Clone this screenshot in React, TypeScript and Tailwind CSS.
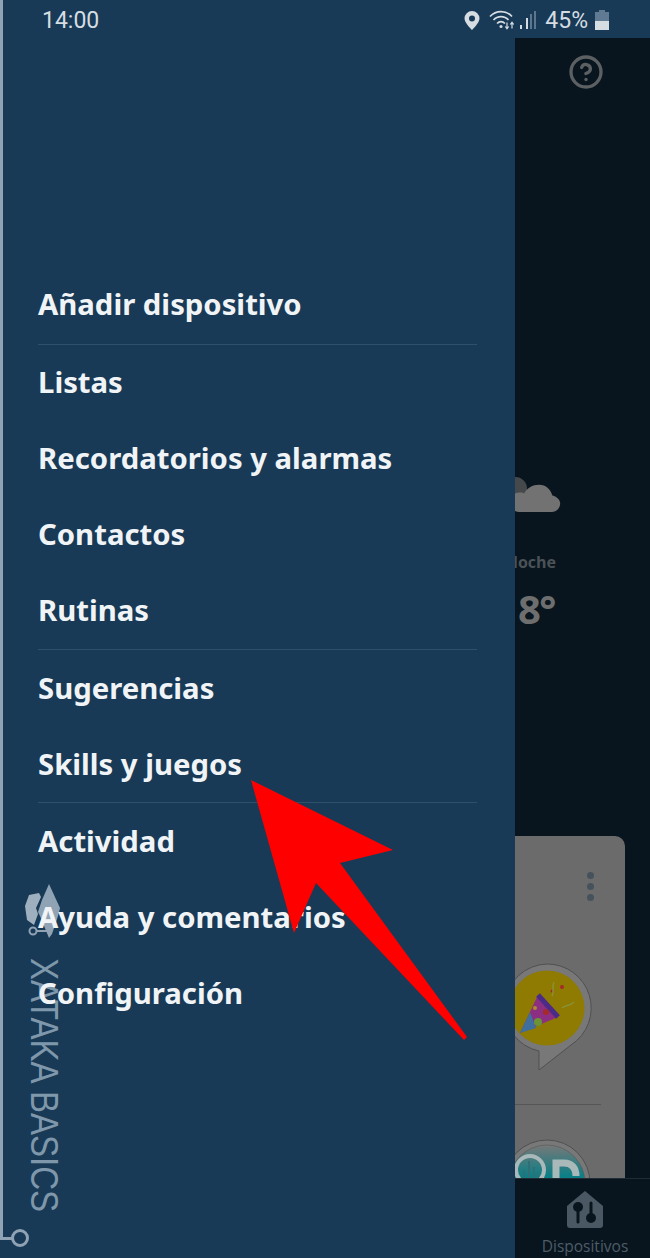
import { CircleHelp } from "lucide-react";

const GROUPS = [
  { cls: "pb-[2px]", items: ["Añadir dispositivo"] },
  { cls: "border-t border-[#2f506b] pb-[1px] [&>li:first-child]:-mt-px", items: ["Listas", "Recordatorios y alarmas", "Contactos", "Rutinas"] },
  { cls: "border-t border-[#2f506b]", items: ["Sugerencias", "Skills y juegos"] },
  { cls: "border-t border-[#2f506b]", items: ["Actividad", "Ayuda y comentarios", "Configuración"] },
];

function StatusIcons() {
  return (
    <div className="flex items-center">
      <svg width="16" height="19" viewBox="0 0 16 19" className="mr-[9px]">
        <path d="M8 0a7.500 7.500 0 0 0-7.500 7.500C.5 12 8 19 8 19s7.500-7 7.500-11.500A7.500 7.500 0 0 0 8 0zm0 4.500a3 3 0 1 1 0 6 3 3 0 0 1 0-6z" fill="#d5dde3" />
      </svg>
      <svg width="47" height="20" viewBox="0 0 47 20" className="mr-[9px]" fill="none">
        <path d="M1 6.500c6-6.500 16-6.500 22 0M4.500 10c4-4.500 11-4.500 15 0M8 13.500c2.500-2.500 5.500-2.500 8 0" stroke="#d5dde3" strokeWidth="1.700" />
        <circle cx="12" cy="16.500" r="1.500" fill="#d5dde3" />
        <path d="M18 12.500v6M16.300 16.500l1.700 2.200 1.700-2.200M23 18.500v-6M21.300 14.500l1.700-2.200 1.700 2.200" stroke="#d5dde3" strokeWidth="1.200" />
        <path d="M32 19v-4M38 19V8" stroke="#d5dde3" strokeWidth="2" />
        <path d="M42 19V4M46 19V1" stroke="#6d869b" strokeWidth="1.600" />
      </svg>
      <span className="mr-[7px] text-[23px] leading-none text-[#d5dde3]">45%</span>
      <svg width="14" height="20" viewBox="0 0 14 20" className="mr-[41px]">
        <path d="M4 0h6v2h4v18H0V2h4z" fill="#5f7a92" />
        <path d="M0 11h14v9H0z" fill="#d5dde3" />
      </svg>
    </div>
  );
}

function Watermark() {
  return (
    <div className="absolute left-0 top-[-38px]">
      <div className="absolute left-0 top-0 h-[1239px] w-[3px] bg-[#8fa3b4]" />
      <div className="absolute left-0 top-[1237px] h-[3px] w-[12px] bg-[#8fa3b4]" />
      <div className="absolute left-[11px] top-[1229px] h-[18px] w-[18px] rounded-full border-[3px] border-[#8fa3b4]" />
      <svg width="40" height="56" viewBox="0 0 40 56" className="absolute left-[24px] top-[884px]">
        <path d="M25 0 36 24 34 32 28 50 25 54 16 32 14 28 18 16z" fill="#8fa3b4" />
        <path d="M15 9 5 11 1 22 3 36 10 41 14 30 12 24 17 13z" fill="#9eb0bf" />
        <circle cx="9" cy="47" r="3.500" fill="none" stroke="#8fa3b4" strokeWidth="2" />
        <path d="M13 47h13" stroke="#8fa3b4" strokeWidth="2" />
      </svg>
      <span className="absolute left-[25px] top-[958px] origin-top scale-y-[.87] whitespace-nowrap text-[38px] leading-[38px] text-[#7f97aa] [writing-mode:vertical-rl] font-['Liberation_Sans',sans-serif]">
        XATAKA BASICS
      </span>
    </div>
  );
}

function Drawer() {
  return (
    <nav className="relative w-[515px] shrink-0 bg-[#183a56] pl-[38px] pr-[38px] pt-[228px]">
      <Watermark />
      <div className="relative font-['Noto_Sans',sans-serif]">
        {GROUPS.map((group) => (
          <ul key={group.items[0]} className={group.cls}>
            {group.items.map((label) => (
              <li key={label} className="flex h-[76px] items-center whitespace-nowrap pt-[2px] text-[29.300px] font-bold text-[#f1f4f6]">
                {label}
              </li>
            ))}
          </ul>
        ))}
      </div>
    </nav>
  );
}

function Behind() {
  return (
    <main className="flex min-w-0 flex-1 flex-col overflow-hidden bg-[#08151f]">
      <div className="flex h-[68px] items-center justify-end pr-[46px]">
        <CircleHelp size={36} strokeWidth={2.2} className="text-[#5c6063]" />
      </div>
      <div className="ml-[-40px] mt-[369px] flex h-[154px] w-[86px] flex-col items-end">
        <svg width="64" height="40" viewBox="0 0 64 40" className="ml-auto">
          <circle cx="18" cy="14" r="12" fill="#45494b" />
          <path d="M22 38a10 10 0 0 1 0-20c2 0 4 0 5 1 3-6 9-9 15-9 8 0 12 5 14 11 5 1 8 5 8 8 0 5-4 9-9 9z" fill="#727272" />
        </svg>
        <span className="mr-[5px] mt-[40px] text-[16px] font-bold leading-none text-[#4b5256]">Noche</span>
        <span className="mr-[6px] mt-[19px] text-[40px] font-bold leading-none tracking-[-1.5px] text-[#6e6e6e]">8°</span>
      </div>
      <section className="ml-[-40px] mt-[207px] flex h-[342px] w-[150px] flex-col rounded-tr-[10px] bg-[#6b6b6b]">
        <div className="ml-auto mr-[31px] mt-[36px] flex flex-col gap-[4px]">
          <span className="h-[7px] w-[7px] rounded-full bg-[#45525c]" />
          <span className="h-[7px] w-[7px] rounded-full bg-[#45525c]" />
          <span className="h-[7px] w-[7px] rounded-full bg-[#45525c]" />
        </div>
        <svg width="100" height="112" viewBox="0 0 100 112" className="ml-[25px] mt-[59px]">
          <path d="M47 4a44 44 0 0 1 24 81L39 110V91A44 44 0 0 1 47 4z" fill="#787878" stroke="#505050" />
          <circle cx="47" cy="48" r="37.500" fill="#8f7a02" />
          <path d="M20 73 38 35 58 57z" fill="#8c2f83" />
          <path d="M38 35 58 57" stroke="#4b2a88" strokeWidth="5" />
          <path d="M20 73 30 52 36 68z" fill="#3f6f9c" />
          <circle cx="46" cy="52" r="3" fill="#a62a2a" />
          <circle cx="38" cy="62" r="4" fill="#6b9436" />
          <circle cx="35" cy="48" r="2" fill="#b08a2a" />
          <circle cx="62" cy="27" r="2" fill="#a62a2a" />
          <circle cx="52" cy="31" r="1.500" fill="#a62a2a" />
          <path d="M52 36c3-5-1-8 2-14M62 48c4-3 8-2 12-6" stroke="#8a9236" strokeWidth="1.500" fill="none" />
        </svg>
        <div className="mt-[32px] h-px w-[126px] bg-[#565656]" />
        <div className="ml-[25px] mt-[34px] h-[39px] w-[92px] overflow-hidden">
          <svg width="92" height="92" viewBox="0 0 92 92">
            <defs>
              <linearGradient id="logoFade" x1="0" y1="0" x2="0" y2="1">
                <stop offset="0" stopColor="#787878" />
                <stop offset="0.4" stopColor="#0d7f86" />
              </linearGradient>
            </defs>
            <circle cx="47" cy="44" r="43" fill="#787878" stroke="#505050" />
            <circle cx="47" cy="44" r="38" fill="url(#logoFade)" stroke="#505050" strokeWidth="0.5" />
            <circle cx="30" cy="31" r="14" fill="none" stroke="#a9b9ba" strokeWidth="4" />
            <path d="M24 39v-8M29 39V22M34 39v-11M38 39v-6" stroke="#2f6f75" strokeWidth="2" />
            <path d="M56 50V24h8c8 0 12 5 12 13" fill="none" stroke="#a9b9ba" strokeWidth="7" />
          </svg>
        </div>
      </section>
      <footer className="flex flex-1 flex-col items-end border-t border-[#1f2c36]">
        <div className="mr-[20px] flex w-[90px] flex-col items-center pt-[12px]">
          <svg width="36" height="38" viewBox="0 0 36 38">
            <path d="M18 0 36 15v19a3 3 0 0 1-3 3H3a3 3 0 0 1-3-3V15z" fill="#4a5863" />
            <circle cx="11" cy="16" r="5" fill="#08151f" />
            <path d="M11 18v13" stroke="#08151f" strokeWidth="3" strokeLinecap="round" />
            <circle cx="24" cy="27" r="5" fill="#08151f" />
            <path d="M24 12v14" stroke="#08151f" strokeWidth="3" strokeLinecap="round" />
          </svg>
          <span className="mt-[10px] whitespace-nowrap text-[15.500px] leading-none text-[#4e5c67]">Dispositivos</span>
        </div>
      </footer>
    </main>
  );
}

export default function App() {
  return (
    <div className="relative flex h-[1258px] w-[650px] flex-col overflow-hidden bg-[#183a56] font-['Open_Sans',sans-serif]">
      <header className="flex h-[38px] shrink-0 items-center justify-between pl-[42px] pt-[2px] font-['Roboto',sans-serif]">
        <span className="text-[23px] leading-none text-[#d5dde3]">14:00</span>
        <StatusIcons />
      </header>
      <div className="flex min-h-0 flex-1">
        <Drawer />
        <Behind />
      </div>
      <svg width="650" height="1258" viewBox="0 0 650 1258" className="pointer-events-none absolute left-0 top-0">
        <path d="M251 780 393 850 340 863 467 1037 464 1040 316 883 294 933z" fill="#ff0000" />
      </svg>
    </div>
  );
}
